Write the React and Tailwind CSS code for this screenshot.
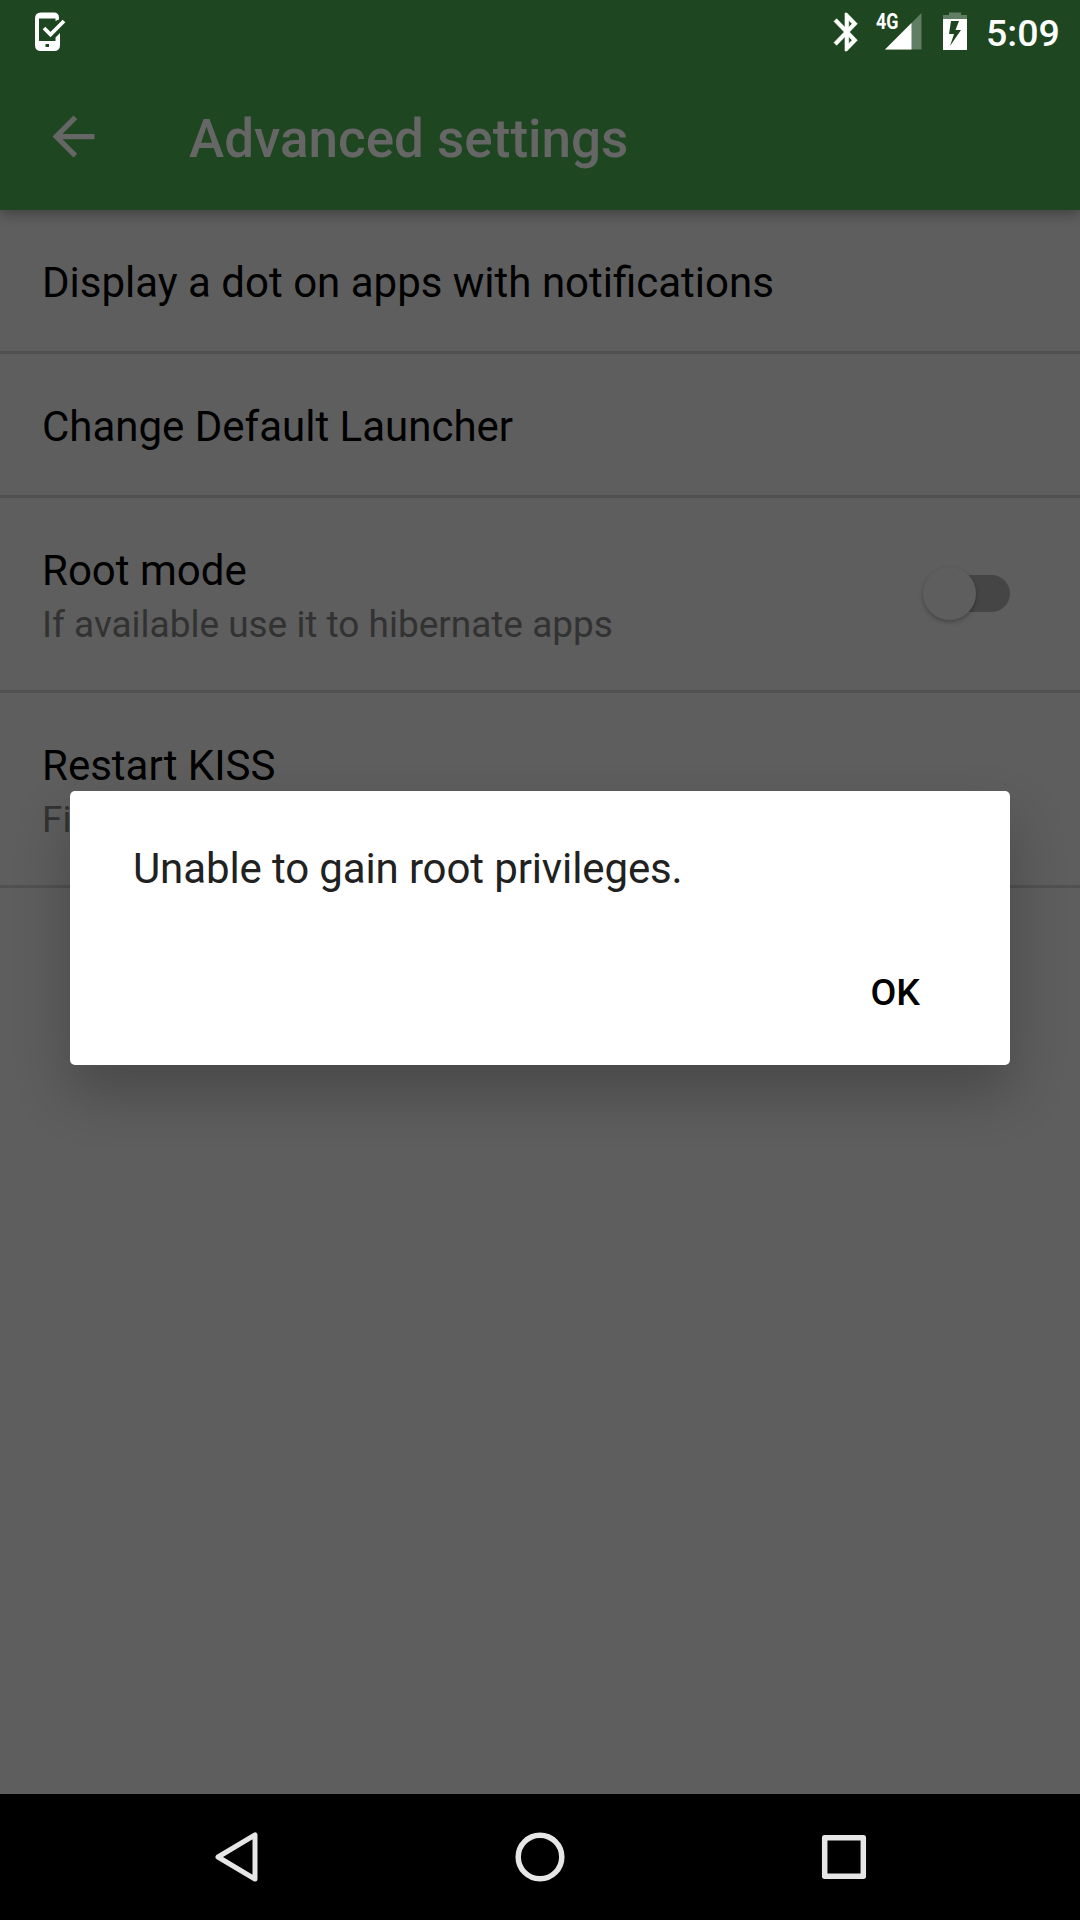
import React from "react";

function StatusBar() {
  return (
    <div className="flex h-[66px] items-start justify-between text-white">
      <svg className="ml-[28px] mt-[6px] h-[50px] w-[44px]" viewBox="28 6 44 50" fill="none">
        <path
          d="M59 19.500V18Q59 12.500 54 12.500H41Q35 12.500 35 18.500V45Q35 51 41 51H54Q60 51 60 45V33L55.500 37.500V41H39V18.500H55.500V21Z"
          fill="#fff"
        />
        <path d="M44 28L50.500 34.500L64 21" stroke="#fff" strokeWidth="3.800" />
        <rect x="45.500" y="44" width="3.500" height="3" fill="#1e4620" />
      </svg>
      <div className="flex">
        <svg className="mt-[6px] h-[50px] w-[150px]" viewBox="828 6 150 50">
          <path
            transform="translate(824.900 9.200) scale(1.830 1.900)"
            fill="#fff"
            stroke="#fff"
            strokeWidth="0.350"
            d="M17.710 7.710L12 2h-1v7.590L6.410 5 5 6.410 10.590 12 5 17.590 6.410 19 11 14.410V22h1l5.710-5.710-4.300-4.290 4.300-4.290zM13 5.830l1.880 1.880L13 9.590V5.830zm1.880 10.460L13 18.170v-3.760l1.880 1.880z"
          />
          <text
            x="876"
            y="29"
            fontSize="22"
            fontWeight="700"
            fontFamily="Roboto"
            textLength="22.500"
            lengthAdjust="spacingAndGlyphs"
            fill="#fff"
          >
            4G
          </text>
          <path d="M885 49.500L921.500 13V49.500Z" fill="#fff" opacity="0.300" />
          <path d="M885 49.500L911.500 23V49.500Z" fill="#fff" />
          <path d="M943 19V15H949V12.500H961V15H967V19Z" fill="#fff" opacity="0.300" />
          <path d="M943 19H967V50H943ZM951 21L949 34H954L950 46L961 30H955.500L959 21Z" fill="#fff" fillRule="evenodd" />
        </svg>
        <div className="mt-[12px] w-[102px] pl-[8px] text-[37.500px] font-medium leading-[43px]">5:09</div>
      </div>
    </div>
  );
}

function SettingRow({ title, subtitle, children }) {
  return (
    <div className="flex items-start justify-between border-b-[3px] border-[#515151] pb-[46px] pl-[42px] pr-[70px] pt-[50px]">
      <div>
        <div className="text-[42px] leading-[45px] text-black">{title}</div>
        {subtitle && (
          <div className="mt-[8px] h-[43px] whitespace-nowrap text-[37px] leading-[48px] tracking-[-0.020px] text-[#323232]">{subtitle}</div>
        )}
      </div>
      {children}
    </div>
  );
}

function Switch() {
  return (
    <div className="mt-[18px] flex h-[54px] w-[87px] items-center">
      <div className="z-10 h-[53px] w-[53px] shrink-0 rounded-full bg-[#5e5e5e] shadow-[0_2px_4px_rgba(0,0,0,0.27)]" />
      <div className="-ml-[34px] h-[37px] w-[68px] rounded-full bg-[#454545]" />
    </div>
  );
}

function NavBar() {
  return (
    <div className="flex h-[126px] items-center justify-between bg-black px-[206px]">
      <svg className="h-[60px] w-[60px]" viewBox="0 0 60 60" fill="none" stroke="#e6e6e6" strokeWidth="5" strokeLinejoin="round">
        <path d="M49 8V52L12 30Z" />
      </svg>
      <svg className="h-[60px] w-[60px]" viewBox="0 0 60 60" fill="none" stroke="#e6e6e6" strokeWidth="5.500">
        <circle cx="30" cy="30" r="21.800" />
      </svg>
      <svg className="h-[60px] w-[60px]" viewBox="0 0 60 60" fill="none" stroke="#e6e6e6" strokeWidth="5.500" strokeLinejoin="round">
        <rect x="10.700" y="10.700" width="38.600" height="38.600" />
      </svg>
    </div>
  );
}

function Dialog() {
  return (
    <div className="absolute left-[70px] top-[791px] z-20 flex h-[274px] w-[940px] flex-col justify-between rounded-[5px] bg-white pb-[49px] pl-[63px] pr-[90px] pt-[53px] shadow-[0_28px_56px_rgba(0,0,0,0.24)]">
      <div className="text-[42px] leading-[50px] tracking-[-0.120px] text-[#212121]">Unable to gain root privileges.</div>
      <div className="self-end text-[37.500px] font-medium leading-[48px] text-black">OK</div>
    </div>
  );
}

export default function App() {
  return (
    <div className="relative flex h-[1920px] w-[1080px] flex-col overflow-hidden bg-[#5e5e5e] font-['Roboto',sans-serif]">
      <header className="z-10 h-[210px] bg-[#1e4620] shadow-[0_4px_12px_rgba(0,0,0,0.3)]">
        <StatusBar />
        <div className="flex h-[144px] items-start text-[#666666]">
          <svg className="ml-[42px] mt-[39px] h-[63px] w-[63px]" viewBox="0 0 24 24" fill="currentColor">
            <path d="M20 11H7.830l5.590-5.590L12 4l-8 8 8 8 1.410-1.410L7.830 13H20v-2z" />
          </svg>
          <h1 className="ml-[84px] mt-[43px] text-[53px] font-medium leading-[60px]">Advanced settings</h1>
        </div>
      </header>
      <main className="flex-1">
        <SettingRow title="Display a dot on apps with notifications" />
        <SettingRow title="Change Default Launcher" />
        <SettingRow title="Root mode" subtitle="If available use it to hibernate apps">
          <Switch />
        </SettingRow>
        <SettingRow title="Restart KISS" subtitle="Fix" />
      </main>
      <NavBar />
      <Dialog />
    </div>
  );
}
